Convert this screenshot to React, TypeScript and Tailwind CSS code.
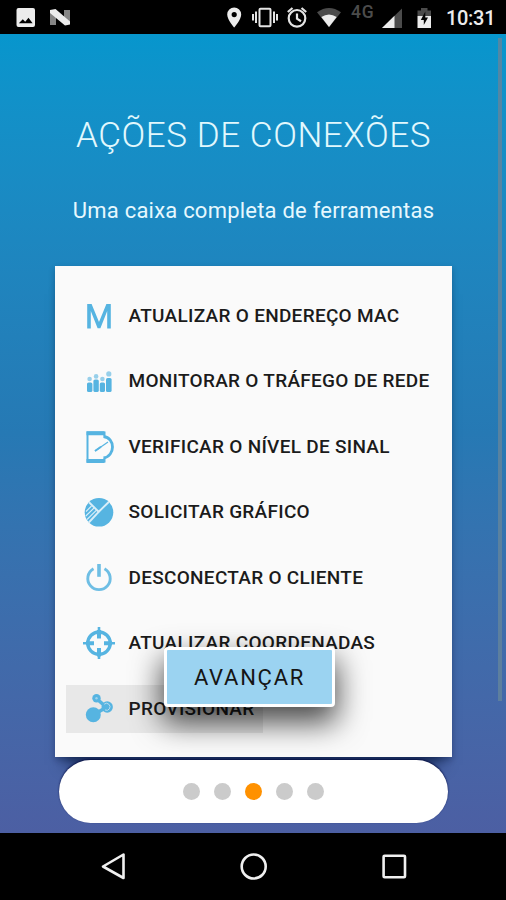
import React from 'react';

interface Action {
  id: string;
  label: string;
  icon: React.ReactNode;
  active?: boolean;
}

const actions: Action[] = [
  {
    id: 'mac',
    label: 'ATUALIZAR O ENDEREÇO MAC',
    icon: (
      <path
        d="M4.2 29.5V5H8.6L16 23L23.4 5H27.8V29.5H24.2V12L17.4 29.3H14.6L7.8 12V29.5Z"
        fill="currentColor"
      />
    ),
  },
  {
    id: 'traffic',
    label: 'MONITORAR O TRÁFEGO DE REDE',
    icon: (
      <g fill="currentColor">
        <rect x="4" y="18.5" width="5.4" height="9.6" rx="1.6" />
        <rect x="10.4" y="15.5" width="5.4" height="12.6" rx="1.6" />
        <rect x="16.8" y="18.5" width="5.2" height="9.6" rx="1.6" />
        <rect x="23" y="14" width="5.6" height="14.1" rx="1.6" />
        <g opacity=".6">
          <circle cx="6.6" cy="15" r="2.3" />
          <circle cx="13.1" cy="12.4" r="2.3" />
          <circle cx="19.4" cy="15" r="2.3" />
          <circle cx="25.8" cy="9.9" r="2.6" />
        </g>
      </g>
    ),
  },
  {
    id: 'signal',
    label: 'VERIFICAR O NÍVEL DE SINAL',
    icon: (
      <g fill="none" stroke="currentColor">
        <path d="M21.5 6.5V2.5H4.5V31.5H21.5V28" strokeWidth="2" />
        <path d="M3.5 3.3H21.5M3.5 31H21.5" strokeWidth="4" />
        <path d="M20.5 6.5C32.5 8 32.5 26 20.5 28" strokeWidth="2.8" />
        <path d="M12 21L25 12" strokeWidth="1.2" />
        <path d="M12 21L18 16.8" strokeWidth="2" />
      </g>
    ),
  },
  {
    id: 'graph',
    label: 'SOLICITAR GRÁFICO',
    icon: (
      <g>
        <circle cx="16" cy="17.3" r="14.3" fill="currentColor" />
        <g stroke="#d9eef8" fill="none">
          <path d="M6 7.3L15.7 16.8L26 6.7" strokeWidth="1.9" />
          <path d="M15.7 16.8L5.8 27.5" strokeWidth="1.9" />
          <path d="M3 16.5L8.5 11M2.8 21L11 13M4 24.5L13.5 15.2" strokeWidth="1.1" />
        </g>
      </g>
    ),
  },
  {
    id: 'disconnect',
    label: 'DESCONECTAR O CLIENTE',
    icon: (
      <g fill="none" stroke="currentColor" strokeWidth="2.9" opacity=".85">
        <path d="M10.5 7.7A11.2 11.2 0 1 0 21.5 7.7" />
        <path d="M16 3V15.8" strokeWidth="3.6" />
      </g>
    ),
  },
  {
    id: 'coordinates',
    label: 'ATUALIZAR COORDENADAS',
    icon: (
      <g fill="none" stroke="currentColor">
        <circle cx="16" cy="17.2" r="11.2" strokeWidth="3.4" />
        <path d="M16 4V12.5M16 22V30.5M3 17.2H11M21 17.2H29" strokeWidth="4" />
        <path d="M16 1V33M0 17.2H32" strokeWidth="2.6" strokeDasharray="4 24" />
      </g>
    ),
  },
  {
    id: 'provision',
    label: 'PROVISIONAR',
    active: true,
    icon: (
      <g>
        <path d="M11 22.5L20.5 17M13.5 6.5L23 15" stroke="currentColor" strokeWidth="3.6" />
        <circle cx="10.3" cy="22.7" r="7.5" fill="currentColor" />
        <circle cx="13.5" cy="6.3" r="4.2" fill="currentColor" />
        <circle cx="24.2" cy="15" r="5.7" fill="currentColor" />
        <path d="M21.2 12.2A3.5 3.5 0 1 1 22 18" stroke="#b8dcee" strokeWidth="1" fill="none" />
        <circle cx="13.5" cy="6.3" r="1.2" fill="#9fd2ec" />
      </g>
    ),
  },
];

const pages = [0, 1, 2, 3, 4];
const currentPage = 2;

const StatusBar: React.FC = () => (
  <header className="h-[34px] shrink-0 bg-black">
    <svg className="block" width="506" height="34" viewBox="0 0 506 34" fill="#ececec">
      {/* gallery */}
      <path
        fillRule="evenodd"
        d="M18.5 8H33a2 2 0 0 1 2 2V25a2 2 0 0 1-2 2H18.5a2 2 0 0 1-2-2V10a2 2 0 0 1 2-2ZM18.8 23.2H32.6L28.5 17.8L25.2 21.8L22.8 19.2Z"
      />
      {/* android N */}
      <path d="M50 10L56 13V25H50ZM64 10H70V23L64 20Z" fill="#858585" />
      <path d="M50 10L55.5 9L70 21.5V24.5L65 25.4L50 13Z" />
      {/* location */}
      <path
        fillRule="evenodd"
        d="M234.2 7.5A7 7 0 0 0 227.2 14.5C227.2 19.7 234.2 27.5 234.2 27.5S241.2 19.7 241.2 14.5A7 7 0 0 0 234.2 7.5ZM234.2 12A2.6 2.6 0 1 1 234.2 17.2A2.6 2.6 0 1 1 234.2 12Z"
      />
      {/* vibrate */}
      <g fill="none" stroke="#e4e4e4" strokeWidth="2">
        <rect x="259.5" y="8.7" width="11" height="17.5" rx="1" />
        <path d="M256 11.5V23M253 14V20.5M274 11.5V23M277 14V20.5" />
      </g>
      {/* alarm */}
      <g fill="none" stroke="#e4e4e4" strokeWidth="2.2">
        <circle cx="297" cy="18.3" r="8.3" />
        <path d="M297 13.5V18.7L301 21.2M287.8 12L292.5 8M306.2 12L301.5 8" />
      </g>
      {/* wifi */}
      <path d="M317 12.3Q329 3.7 341 12.3L329 27.2Z" fill="#4b4b4b" />
      <path d="M321.3 17.1Q329 11.8 336.7 17.1L329 27Z" />
      <text
        x="351"
        y="18.4"
        fontFamily="Roboto, sans-serif"
        fontSize="17.5"
        fontWeight="500"
        fill="#4c4c4c"
        letterSpacing=".8"
      >
        4G
      </text>
      {/* mobile signal */}
      <path d="M402 8.5V28H382Z" fill="#4b4b4b" />
      <path d="M394.5 15.8V28H382Z" />
      {/* battery */}
      <path d="M417.5 16V10.5H421V8H427.5V10.5H431V16Z" fill="#4b4b4b" />
      <path d="M417.5 16H431V28H417.5Z" />
      <path d="M425.3 11.5L420.8 20H423.8V25L428 17.5H425.3Z" fill="#050505" />
      <text
        x="446"
        y="25.3"
        fontFamily="Roboto, sans-serif"
        fontSize="20"
        fontWeight="500"
        textLength="49.5"
        lengthAdjust="spacing"
      >
        10:31
      </text>
    </svg>
  </header>
);

const ActionRow: React.FC<{ action: Action }> = ({ action }) => (
  <li
    className={`flex h-12 w-fit items-center gap-3.5 pl-[17px] pr-2 ${
      action.active ? 'bg-[#e8e8e8]' : ''
    }`}
  >
    <svg className="h-[33px] w-8 shrink-0 text-[#56b4e1]" viewBox="0 0 32 33">
      {action.icon}
    </svg>
    <span className="pt-px text-[19px] leading-6 font-medium tracking-[0.29px] whitespace-nowrap text-[#1b1b1b]">
      {action.label}
    </span>
  </li>
);

const NavigationBar: React.FC = () => (
  <nav className="flex h-[67px] shrink-0 items-center bg-black">
    <svg width="506" height="67" viewBox="0 0 506 67" fill="none" stroke="#f0f0f0" strokeWidth="2.6">
      <path d="M123.5 21.5V45L103 33.5Z" strokeLinejoin="round" />
      <circle cx="253.7" cy="33.5" r="12" />
      <rect x="383.6" y="22.8" width="21.4" height="21.4" rx="1" />
    </svg>
  </nav>
);

const App: React.FC = () => (
  <div className="flex h-[900px] w-[506px] flex-col overflow-hidden font-['Roboto',sans-serif]">
    <StatusBar />

    <main className="relative flex h-[799px] shrink-0 flex-col items-center bg-linear-to-b from-[#0796cd] via-[#2679b4] to-[#4c5fa3]">
      <div className="absolute top-1 right-1 h-[663px] w-1 bg-[#64859b]/80" />

      <h1 className="mt-20 h-11 pl-px text-[35px] leading-[44px] font-light tracking-[0.58px] whitespace-nowrap text-[#e2f8fd]">
        AÇÕES DE CONEXÕES
      </h1>
      <p className="mt-[39px] h-7 pl-px text-[22px] leading-7 tracking-[0.22px] whitespace-nowrap text-[#e6f8fe]">
        Uma caixa completa de ferramentas
      </p>

      <section className="relative mt-[41px] h-[490.5px] w-[397px] bg-[#fafafa] pt-[25px] pl-[11px] shadow-[0_18px_14px_-10px_rgba(0,15,50,0.6),0_3px_6px_rgba(0,15,50,0.3)]">
        <ul className="flex flex-col gap-[17.6px]">
          {actions.map((action) => (
            <ActionRow key={action.id} action={action} />
          ))}
        </ul>
        <button
          type="button"
          className="absolute top-[381px] left-[109px] h-[60px] w-[171px] rounded-[4px] border-[3px] border-white bg-[#9bd3f1] pt-px pl-px text-[22px] tracking-[1.75px] text-[#151515] shadow-[0_14px_30px_2px_rgba(0,0,0,0.7)]"
        >
          AVANÇAR
        </button>
      </section>

      <div className="relative mt-[3.5px] flex h-[63px] w-[389px] items-center justify-center gap-3.5 rounded-full bg-white shadow-[0_-1px_2px_rgba(0,8,60,0.8)]">
        {pages.map((page) => (
          <span
            key={page}
            className={`size-[17px] rounded-full ${page === currentPage ? 'bg-[#ff9100]' : 'bg-[#cbcbcb]'}`}
          />
        ))}
      </div>
    </main>

    <NavigationBar />
  </div>
);

export default App;
